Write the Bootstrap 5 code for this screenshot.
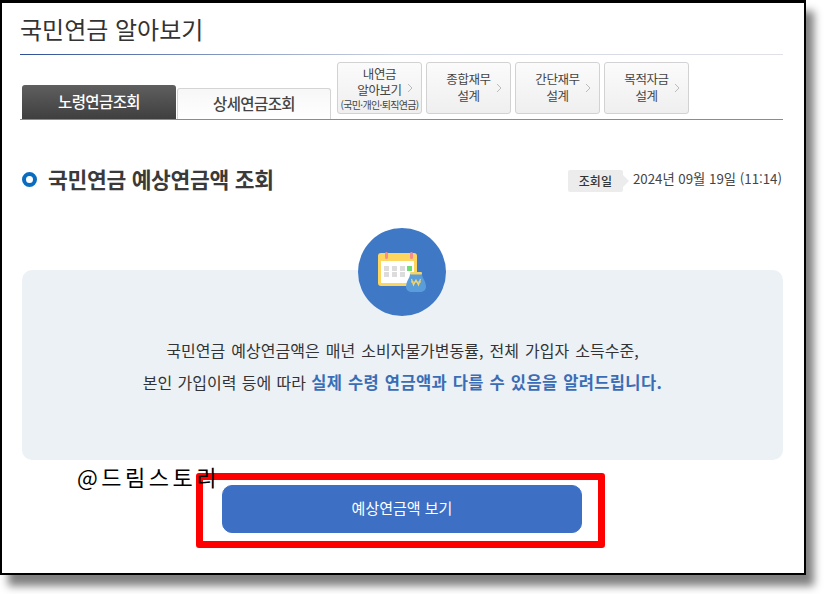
<!DOCTYPE html>
<html lang="ko">
<head>
  <meta charset="UTF-8" />
  <meta name="viewport" content="width=device-width, initial-scale=1.0"/>
  <title>국민연금 알아보기</title>
  <link href="https://cdn.jsdelivr.net/npm/bootstrap@5.3.0/dist/css/bootstrap.min.css" rel="stylesheet" />
  <style>
    body { background: #fff; font-family: "Noto Sans CJK KR", "Noto Sans", sans-serif; color: #333; overflow: hidden; }
    .shot-shadow { position: absolute; left: 8px; top: 11px; width: 806px; height: 575px; background: rgba(0,0,0,.5); filter: blur(4px); }
    .shot-frame { position: relative; width: 806px; height: 575px; border: 2px solid #000; border-top-width: 3px; background: #fff; padding: 0 21px 0 18px; }
    .page-title { font-size: 24px; font-weight: 400; line-height: 35px; margin: 0; padding-top: 8px; height: 52px; color: #333; background: linear-gradient(90deg, #2f4f96, #8fa0c4 30%, #cfd5e2 50%, #dfe1e6) bottom / 100% 1px no-repeat; }
    .tab-row { height: 65px; border-bottom: 1px solid #8c8c8c; }
    .tab-main { width: 154px; height: 34px; margin-left: 2px; border-radius: 3px 3px 0 0; font-size: 15.5px; font-weight: 500; letter-spacing: -.6px; display: flex; align-items: center; justify-content: center; background: linear-gradient(#5f5f5f, #3f3f3f); color: #fff; }
    .tab-sub { width: 154px; height: 31px; margin-left: 1px; border: 1px solid #d4d4d4; border-bottom: 0; border-radius: 3px 3px 0 0; font-size: 15.5px; font-weight: 500; letter-spacing: -.6px; display: flex; align-items: center; justify-content: center; background: linear-gradient(#f7f7f7, #fff); color: #444; }
    .side-links { gap: 4px; margin-left: 6px; margin-bottom: 5px; }
    .side-link { position: relative; width: 85px; height: 52px; border: 1px solid #d2d2d2; border-radius: 3px; background: linear-gradient(#fbfbfb, #efefef); font-size: 12.5px; line-height: 17px; letter-spacing: -.4px; color: #444; display: flex; flex-direction: column; align-items: center; justify-content: center; padding-bottom: 2px; text-align: center; }
    .side-link svg { position: absolute; right: 8px; top: 20px; }
    .side-first { line-height: 16px; padding-bottom: 0; }
    .side-note { font-size: 10px; letter-spacing: -.65px; line-height: 13px; white-space: nowrap; }
    .head-row { margin-top: 43px; height: 32px; padding-left: 2px; }
    .bullet-ring { width: 15px; height: 15px; border: 4px solid #0a6cc0; border-radius: 50%; margin-right: 11px; }
    .head-text { font-size: 21.5px; font-weight: 700; letter-spacing: -.3px; color: #3a3a3a; margin: 0; }
    .date-tag { position: relative; width: 55px; height: 22px; margin-top: 4px; background: #ececec; border-radius: 2px; font-size: 12px; font-weight: 500; display: flex; align-items: center; justify-content: center; color: #333; margin-right: 10px; }
    .date-tag::after { content: ""; position: absolute; left: 55px; top: 5px; border: 6px solid transparent; border-left-color: #ececec; border-right: 0; }
    .date-text { font-size: 13.3px; color: #444; margin-right: 1px; }
    .notice-panel { position: relative; margin: 75px 0 0 2px; height: 190px; width: 761px; background: #ecf1f6; border-radius: 10px; text-align: center; padding-top: 64px; font-size: 16px; color: #333; word-spacing: 1.6px; }
    .notice-panel p { margin: 0; line-height: 32px; }
    .notice-panel .line-two { word-spacing: .8px; }
    .notice-panel b { color: #3a6db5; font-weight: 700; font-size: 16.5px; letter-spacing: .35px; }
    .icon-disc { position: absolute; left: 336px; top: -42px; width: 88px; height: 88px; }
    .red-box { width: 409px; height: 75px; margin: 13px 0 0 176px; border: 7px solid #f00; border-radius: 3px; padding: 5px 16px 8px 19px; }
    .go-btn { width: 360px; height: 48px; padding-top: 5px; padding-bottom: 7px; background: #3d70c4; border-color: #3d70c4; border-radius: 10px; font-size: 15px; font-weight: 400; color: #fff; }
    .mark-text { position: absolute; left: 75px; top: 457px; font-size: 22px; font-weight: 400; color: #000; letter-spacing: 3.5px; line-height: 32px; }
  </style>
</head>
<body>
  <div class="shot-shadow"></div>
  <div class="shot-frame">
    <h1 class="page-title">국민연금 알아보기</h1>

    <div class="tab-row d-flex align-items-end">
      <div class="tab-main">노령연금조회</div>
      <div class="tab-sub">상세연금조회</div>
      <div class="side-links d-flex">
        <div class="side-link side-first">내연금<br>알아보기<span class="side-note">(국민·개인·퇴직연금)</span>
          <svg width="6" height="10" viewBox="0 0 6 10"><path d="M1 1l4 4-4 4" fill="none" stroke="#bbb"/></svg></div>
        <div class="side-link">종합재무<br>설계
          <svg width="6" height="10" viewBox="0 0 6 10"><path d="M1 1l4 4-4 4" fill="none" stroke="#bbb"/></svg></div>
        <div class="side-link">간단재무<br>설계
          <svg width="6" height="10" viewBox="0 0 6 10"><path d="M1 1l4 4-4 4" fill="none" stroke="#bbb"/></svg></div>
        <div class="side-link">목적자금<br>설계
          <svg width="6" height="10" viewBox="0 0 6 10"><path d="M1 1l4 4-4 4" fill="none" stroke="#bbb"/></svg></div>
      </div>
    </div>

    <div class="head-row d-flex align-items-center">
      <span class="bullet-ring"></span>
      <h2 class="head-text">국민연금 예상연금액 조회</h2>
      <div class="ms-auto d-flex align-items-center">
        <span class="date-tag">조회일</span>
        <span class="date-text">2024년 09월 19일 (11:14)</span>
      </div>
    </div>

    <div class="notice-panel">
      <svg class="icon-disc" viewBox="0 0 88 88">
        <circle cx="44" cy="44" r="44" fill="#3f78c5"/>
        <rect x="20" y="25" width="39" height="33" rx="3" fill="#fdd65f"/>
        <rect x="23" y="33" width="33" height="22" fill="#fff"/>
        <rect x="27" y="24" width="3" height="7" rx="1.5" fill="#f78d8d"/>
        <rect x="52" y="24" width="3" height="7" rx="1.5" fill="#f78d8d"/>
        <g fill="#dcdcdc">
          <rect x="26" y="38" width="5" height="5"/><rect x="34" y="38" width="5" height="5"/><rect x="42" y="38" width="5" height="5"/>
          <rect x="26" y="44" width="5" height="5"/><rect x="34" y="44" width="5" height="5"/><rect x="42" y="44" width="5" height="5"/>
        </g>
        <rect x="49" y="38" width="5" height="5" fill="#6fdc6f"/>
        <path d="M52 46h12c0 4 4 7 4 13 0 3-3 5-6 5H54c-3 0-6-2-6-5 0-6 4-9 4-13z" fill="#5a9ddb"/>
        <rect x="52" y="44" width="12" height="2.500" rx="1" fill="#f6d567"/>
        <path d="M53.500 51l2 6 2.500-5 2.500 5 2-6M53 54h10" fill="none" stroke="#f6d567" stroke-width="1.200"/>
      </svg>
      <p>국민연금 예상연금액은 매년 소비자물가변동률, 전체 가입자 소득수준,</p>
      <p class="line-two">본인 가입이력 등에 따라 <b>실제 수령 연금액과 다를 수 있음을 알려드립니다.</b></p>
    </div>

    <div class="red-box">
      <button type="button" class="btn btn-primary go-btn">예상연금액 보기</button>
    </div>
    <div class="mark-text">@드림스토리</div>
  </div>

  <script src="https://cdn.jsdelivr.net/npm/bootstrap@5.3.0/dist/js/bootstrap.bundle.min.js"></script>
</body>
</html>
